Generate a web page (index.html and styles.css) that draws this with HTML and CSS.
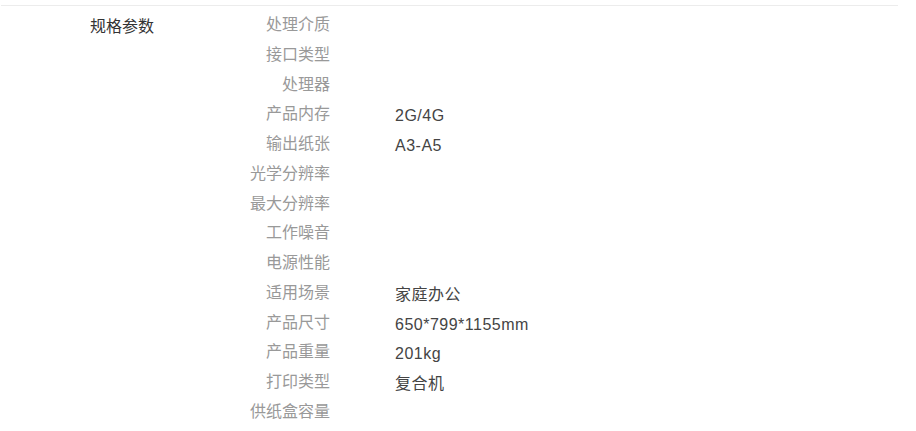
FILE: index.html
```html
<!DOCTYPE html>
<html>
<head>
    <title>规格参数</title>
    <meta charset="utf-8" />

    <link rel="stylesheet" href="styles.css">

</head>
<body>

    <div id="contain">

        <div class="spec_title">规格参数</div>

        <div class="spec_list">
            <div class="spec_row"><span class="spec_label">处理介质</span><span class="spec_value"></span></div>
            <div class="spec_row"><span class="spec_label">接口类型</span><span class="spec_value"></span></div>
            <div class="spec_row"><span class="spec_label">处理器</span><span class="spec_value"></span></div>
            <div class="spec_row"><span class="spec_label">产品内存</span><span class="spec_value">2G/4G</span></div>
            <div class="spec_row"><span class="spec_label">输出纸张</span><span class="spec_value">A3-A5</span></div>
            <div class="spec_row"><span class="spec_label">光学分辨率</span><span class="spec_value"></span></div>
            <div class="spec_row"><span class="spec_label">最大分辨率</span><span class="spec_value"></span></div>
            <div class="spec_row"><span class="spec_label">工作噪音</span><span class="spec_value"></span></div>
            <div class="spec_row"><span class="spec_label">电源性能</span><span class="spec_value"></span></div>
            <div class="spec_row"><span class="spec_label">适用场景</span><span class="spec_value">家庭办公</span></div>
            <div class="spec_row"><span class="spec_label">产品尺寸</span><span class="spec_value">650*799*1155mm</span></div>
            <div class="spec_row"><span class="spec_label">产品重量</span><span class="spec_value">201kg</span></div>
            <div class="spec_row"><span class="spec_label">打印类型</span><span class="spec_value">复合机</span></div>
            <div class="spec_row"><span class="spec_label">供纸盒容量</span><span class="spec_value"></span></div>
        </div>

    </div>

</body>
</html>
```

FILE: styles.css
```css
body {
    margin: 0;
    background: #fff;
    font-family: "Liberation Sans", "Noto Sans CJK SC", sans-serif;
    font-size: 16px;
}

#contain {
    margin: 5px 0 0 1px;
    width: 897px;
    border-top: 1px solid #ececec;
    display: flex;
}

.spec_title {
    width: 160px;
    padding-left: 89px;
    padding-top: 11px;
    line-height: 20px;
    color: #333;
}

.spec_list {
    padding-top: 4px;
}

.spec_row {
    display: flex;
    height: 29.77px;
    line-height: 29.77px;
}

.spec_label {
    width: 80px;
    text-align: right;
    color: #999;
}

.spec_value {
    margin-left: 65px;
    padding-top: 2px;
    letter-spacing: 0.5px;
    color: #444;
}
```
